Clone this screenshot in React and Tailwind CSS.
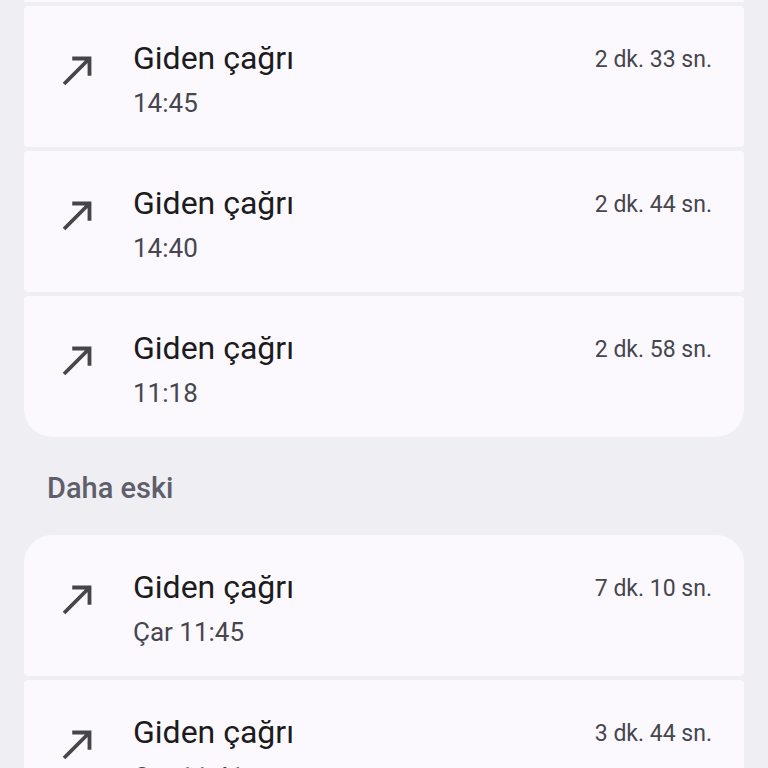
import React from "react";

function CallIcon() {
  return (
    <svg viewBox="0 0 24 24" className="w-[46px] h-[46px] shrink-0" fill="#45464c">
      <path d="M9 5v2h6.59L4 18.59 5.41 20 17 8.41V15h2V5z" />
    </svg>
  );
}

function Card({ time, dur, rounded }) {
  return (
    <div className={`flex h-[141px] bg-[#fbf9fe] pl-[31px] ${rounded}`}>
      <div className="mt-[41px]">
        <CallIcon />
      </div>
      <div className="ml-[32px] pt-[33px] flex flex-col">
        <div className="text-[32px] leading-[38px] text-[#1c1b20]">Giden çağrı</div>
        <div className="mt-[9px] text-[26px] leading-[34px] text-[#46464e]">{time}</div>
      </div>
      <div className="ml-auto pr-[32px] pt-[40px] text-[23px] leading-[28px] text-[#46464e]">{dur}</div>
    </div>
  );
}

export default function App() {
  return (
    <div
      className="w-[768px] h-[768px] overflow-hidden bg-[#efeef3] px-[24px]"
      style={{ fontFamily: "Roboto, 'Noto Sans', sans-serif" }}
    >
      <div className="flex flex-col gap-[4px]">
        <div className="h-[2px] bg-[#fbf9fe] rounded-b-[4px]" />
        <Card time="14:45" dur="2 dk. 33 sn." rounded="rounded-[4px]" />
        <Card time="14:40" dur="2 dk. 44 sn." rounded="rounded-[4px]" />
        <Card time="11:18" dur="2 dk. 58 sn." rounded="rounded-t-[4px] rounded-b-[28px]" />
      </div>
      <div className="h-[98px] pl-[23px] pt-[34px]">
        <div className="text-[29px] leading-[34px] font-medium text-[#5f5e6c]">Daha eski</div>
      </div>
      <div className="flex flex-col gap-[4px]">
        <Card time="Çar 11:45" dur="7 dk. 10 sn." rounded="rounded-t-[28px] rounded-b-[4px]" />
        <Card time="Çar 11:41" dur="3 dk. 44 sn." rounded="rounded-[4px]" />
      </div>
    </div>
  );
}
